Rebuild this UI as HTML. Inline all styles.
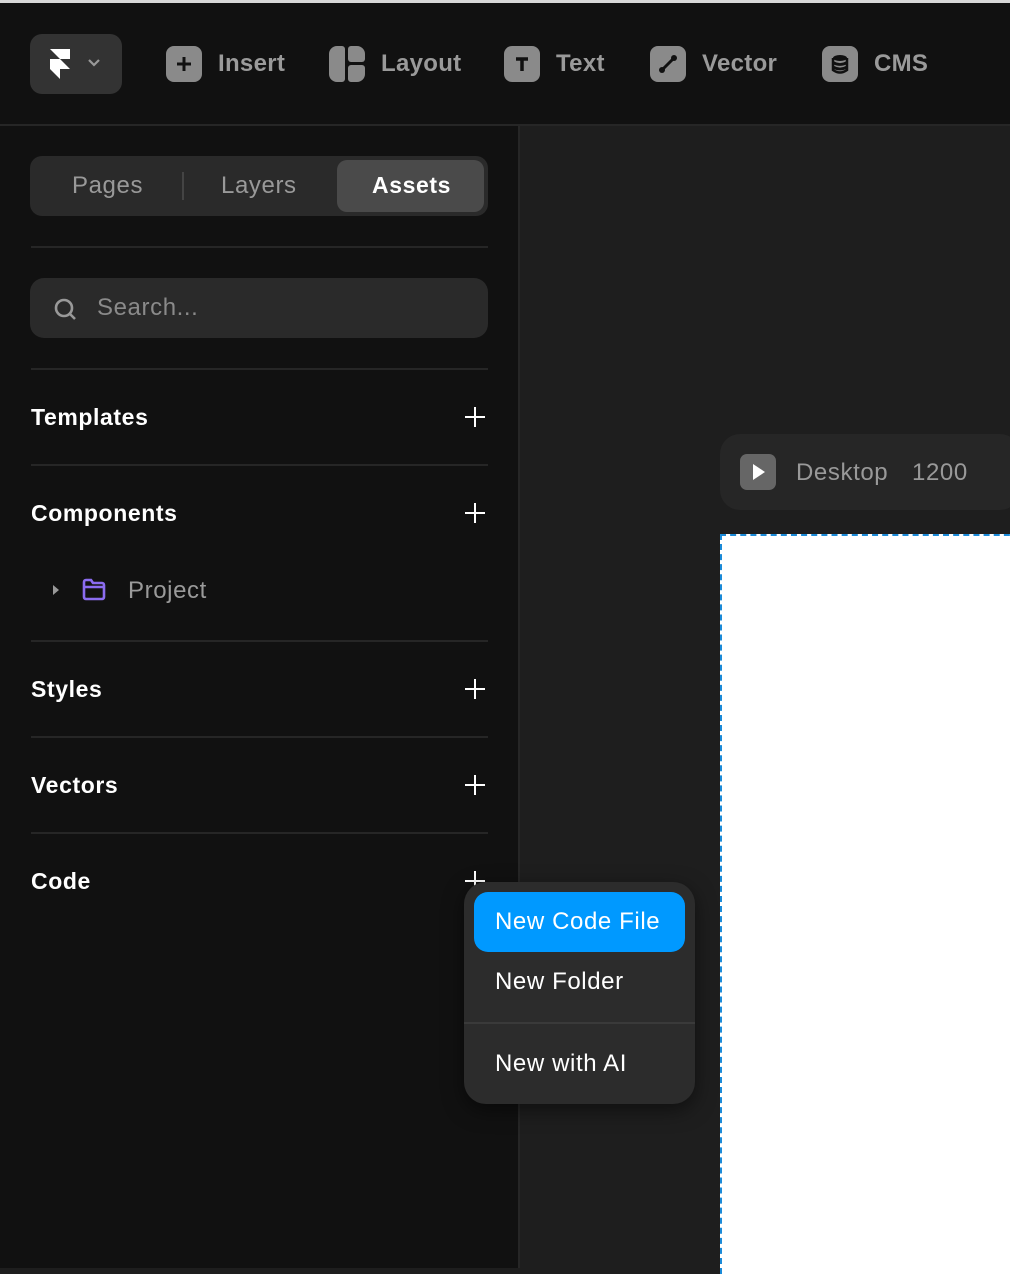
<!DOCTYPE html>
<html><head><meta charset="utf-8"><style>
*{margin:0;padding:0;box-sizing:border-box}
body{width:1010px;height:1268px;overflow:hidden;background:#1e1e1e;font-family:"Liberation Sans",sans-serif;position:relative}
.abs{position:absolute}
.r{font-size:24px;letter-spacing:0.6px}
.top{left:0;top:0;width:1010px;height:3px;background:#d8d8d8}
.hdr{left:0;top:3px;width:1010px;height:121px;background:#111}
.hline{left:0;top:124px;width:1010px;height:2px;background:#262626}
.side{left:0;top:126px;width:520px;height:1142px;background:#111;border-right:2px solid #262626}
.tb{top:47px;height:34px;display:flex;align-items:center;color:#9a9a9a;font-size:24px;font-weight:bold;letter-spacing:0.3px}
.ic{width:36px;height:36px;border-radius:8px;background:#8a8a8a;margin-right:16px;display:flex;align-items:center;justify-content:center}
.sec{left:31px;color:#fff;font-size:23px;font-weight:bold;letter-spacing:0.6px}
.plus{left:465px;width:20px;height:20px}
.plus:before{content:"";position:absolute;left:9px;top:0;width:2.2px;height:20px;background:#fff}
.plus:after{content:"";position:absolute;top:9px;left:0;height:2.2px;width:20px;background:#fff}
.div{left:31px;width:457px;height:2px;background:#262626}
</style></head><body>
<div class="abs top"></div>
<div class="abs hdr"></div>
<div class="abs hline"></div>
<div class="abs" style="left:30px;top:34px;width:92px;height:60px;border-radius:12px;background:#333"></div>
<svg class="abs" style="left:48px;top:47px" width="26" height="34" viewBox="0 0 26 34"><path d="M2 2h20v10H12zM2 12h10l10 10H12v10L2 22z" fill="#fff"/></svg>
<svg class="abs" style="left:86px;top:57px" width="16" height="12" viewBox="0 0 16 12"><path d="M3 3l5 5 5-5" stroke="#999" stroke-width="2.2" fill="none"/></svg>
<div class="abs tb" style="left:166px"><div class="ic"><svg width="20" height="20"><path d="M10 3v14M3 10h14" stroke="#111" stroke-width="3"/></svg></div>Insert</div>
<div class="abs tb" style="left:329px"><div class="ic" style="background:none;position:relative"><div class="abs" style="left:0;top:0;width:16px;height:36px;background:#8a8a8a;border-radius:8px 3px 3px 8px"></div><div class="abs" style="left:19px;top:0;width:17px;height:16px;background:#8a8a8a;border-radius:3px 8px 3px 3px"></div><div class="abs" style="left:19px;top:19px;width:17px;height:17px;background:#8a8a8a;border-radius:3px 3px 8px 3px"></div></div>Layout</div>
<div class="abs tb" style="left:504px"><div class="ic"><svg width="20" height="20"><path d="M4 5h12M10 5v12" stroke="#111" stroke-width="3.5"/></svg></div>Text</div>
<div class="abs tb" style="left:650px"><div class="ic"><svg width="26" height="26"><path d="M7 19L19 7" stroke="#111" stroke-width="3"/><circle cx="7" cy="19" r="3" fill="#111"/><circle cx="19" cy="7" r="3" fill="#111"/></svg></div>Vector</div>
<div class="abs tb" style="left:822px"><div class="ic"><svg width="22" height="22"><ellipse cx="11" cy="5" rx="7" ry="3" fill="#111"/><path d="M4 9.5q7 4 14 0M4 14q7 4 14 0" stroke="#111" stroke-width="2.8" fill="none"/><path d="M4 5v12q7 5 14 0V5" stroke="#111" stroke-width="2.5" fill="none"/></svg></div>CMS</div>

<div class="abs side"></div>
<div class="abs" style="left:30px;top:156px;width:458px;height:60px;border-radius:12px;background:#2a2a2a"></div>
<div class="abs" style="left:337px;top:160px;width:147px;height:52px;border-radius:10px;background:#4a4a4a"></div>
<div class="abs" style="left:182px;top:172px;width:2px;height:28px;background:#444"></div>
<div class="abs r" style="left:72px;top:172px;color:#999">Pages</div>
<div class="abs r" style="left:221px;top:172px;color:#999">Layers</div>
<div class="abs" style="left:372px;top:172px;color:#fff;font-size:23px;font-weight:bold;letter-spacing:0.6px">Assets</div>
<div class="abs div" style="top:246px"></div>
<div class="abs" style="left:30px;top:278px;width:458px;height:60px;border-radius:14px;background:#2a2a2a"></div>
<svg class="abs" style="left:52px;top:296px" width="26" height="26"><circle cx="12" cy="12" r="8" stroke="#999" stroke-width="2.6" fill="none"/><path d="M18 18l5 5" stroke="#999" stroke-width="2.6"/></svg>
<div class="abs r" style="left:97px;top:294px;color:#8a8a8a">Search...</div>
<div class="abs div" style="top:368px"></div>
<div class="abs sec" style="top:404px">Templates</div><div class="abs plus" style="top:407px"></div>
<div class="abs div" style="top:464px"></div>
<div class="abs sec" style="top:500px">Components</div><div class="abs plus" style="top:503px"></div>
<svg class="abs" style="left:52px;top:584px" width="8" height="12"><path d="M1 1l6 5-6 5z" fill="#999"/></svg>
<svg class="abs" style="left:82px;top:578px" width="24" height="24"><path d="M2 7V4a2 2 0 0 1 2-2h5l2 3h9a2 2 0 0 1 2 2v12a2 2 0 0 1-2 2H4a2 2 0 0 1-2-2z M2 9h20" stroke="#8b6cf0" stroke-width="2.6" fill="none"/></svg>
<div class="abs r" style="left:128px;top:577px;color:#9a9a9a">Project</div>
<div class="abs div" style="top:640px"></div>
<div class="abs sec" style="top:676px">Styles</div><div class="abs plus" style="top:679px"></div>
<div class="abs div" style="top:736px"></div>
<div class="abs sec" style="top:772px">Vectors</div><div class="abs plus" style="top:775px"></div>
<div class="abs div" style="top:832px"></div>
<div class="abs sec" style="top:868px">Code</div><div class="abs plus" style="top:871px"></div>

<div class="abs" style="left:720px;top:434px;width:300px;height:76px;border-radius:20px;background:#262626"></div>
<div class="abs" style="left:740px;top:454px;width:36px;height:36px;border-radius:7px;background:#666"></div>
<svg class="abs" style="left:752px;top:463px" width="14" height="18"><path d="M1 1l12 8-12 8z" fill="#fff"/></svg>
<div class="abs r" style="left:796px;top:459px;color:#999">Desktop</div>
<div class="abs r" style="left:912px;top:459px;color:#999">1200</div>
<div class="abs" style="left:720px;top:534px;width:300px;height:740px;background:#fff;border-left:2px dashed #1a8ad8;border-top:2px dashed #1a8ad8"></div>

<div class="abs" style="left:464px;top:882px;width:231px;height:222px;border-radius:22px;background:#2c2c2c;box-shadow:0 6px 20px rgba(0,0,0,.5)"></div>
<div class="abs" style="left:474px;top:892px;width:211px;height:60px;border-radius:14px;background:#0099ff"></div>
<div class="abs r" style="left:495px;top:908px;color:#fff">New Code File</div>
<div class="abs r" style="left:495px;top:968px;color:#fff">New Folder</div>
<div class="abs" style="left:464px;top:1022px;width:231px;height:2px;background:#3a3a3a"></div>
<div class="abs r" style="left:495px;top:1050px;color:#fff">New with AI</div>
</body></html>
